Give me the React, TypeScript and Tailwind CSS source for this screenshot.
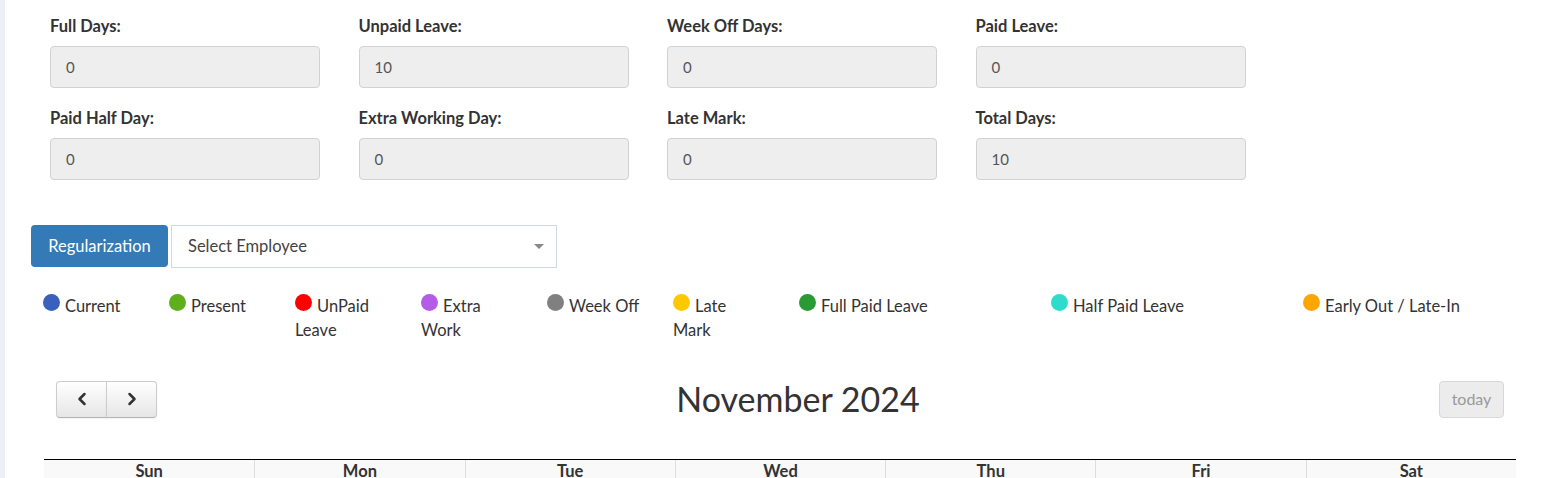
import { ChevronLeft, ChevronRight } from "lucide-react";

const STATS = [
  { label: "Full Days:", value: "0" },
  { label: "Unpaid Leave:", value: "10" },
  { label: "Week Off Days:", value: "0" },
  { label: "Paid Leave:", value: "0" },
  { label: "Paid Half Day:", value: "0" },
  { label: "Extra Working Day:", value: "0" },
  { label: "Late Mark:", value: "0" },
  { label: "Total Days:", value: "10" },
];

const LEGEND = [
  { lines: ["Current"], color: "bg-[#3a5fbd]" },
  { lines: ["Present"], color: "bg-[#5fae1b]" },
  { lines: ["UnPaid", "Leave"], color: "bg-[#ff0000]" },
  { lines: ["Extra", "Work"], color: "bg-[#b45be8]" },
  { lines: ["Week Off"], color: "bg-[#808080]" },
  { lines: ["Late", "Mark"], color: "bg-[#ffc800]" },
  { lines: ["Full Paid Leave"], color: "bg-[#2a9a35]" },
  { lines: ["Half Paid Leave"], color: "bg-[#2ddccb]" },
  { lines: ["Early Out / Late-In"], color: "bg-[#ffa500]" },
];

const DAYS = ["Sun", "Mon", "Tue", "Wed", "Thu", "Fri", "Sat"];

const navBtn =
  "flex w-[51px] items-center justify-center border border-[#ccc] border-b-[#b3b3b3] bg-gradient-to-b from-white to-[#e6e6e6] text-[#333] shadow-[inset_0_1px_0_rgba(255,255,255,0.2),0_1px_2px_rgba(0,0,0,0.05)]";

export default function App() {
  return (
    <div
      className="flex h-[478px] overflow-hidden bg-white text-[#333]"
      style={{ fontFamily: "Lato, 'Liberation Sans', sans-serif" }}
    >
      <div className="w-[5px] shrink-0 bg-[#ecf0f5]" />
      <div className="flex-1">
        {/* Summary fields */}
        <div className="grid grid-cols-[repeat(4,308.5px)] gap-y-[20px] pl-[45px] pt-[16px]">
          {STATS.map((s) => (
            <div key={s.label}>
              <div className="mb-[9px] text-[16.5px] leading-[21px] font-bold text-[#333]">{s.label}</div>
              <div className="flex h-[42px] w-[270px] items-center rounded-[4px] border border-[#d2d2d2] bg-[#eeeeee] px-[15px] text-[15px] text-[#555]">
                {s.value}
              </div>
            </div>
          ))}
        </div>

        {/* Regularization + employee select */}
        <div className="mt-[45px] flex gap-[3px] pl-[26px]">
          <button className="h-[42px] w-[137px] rounded-[4px] bg-[#337ab7] text-[16.5px] text-white">
            Regularization
          </button>
          <div className="flex h-[43px] w-[386px] items-center justify-between border border-[#d2d6de] pr-[12px] pl-[16px] text-[16.5px] text-[#444]">
            <span>Select Employee</span>
            <span className="h-0 w-0 border-x-[5px] border-t-[5px] border-x-transparent border-t-[#888]" />
          </div>
        </div>

        {/* Legend */}
        <div className="mt-[26px] grid grid-cols-[repeat(6,126px)_252px_252px_252px] pl-[38px]">
          {LEGEND.map((l) => (
            <div key={l.lines[0]} className="text-[16.5px] leading-[24px] text-[#333]">
              <span className={`mr-[5px] inline-block h-[17px] w-[17px] rounded-full align-[1px] ${l.color}`} />
              {l.lines[0]}
              {l.lines[1] && <div>{l.lines[1]}</div>}
            </div>
          ))}
        </div>

        {/* Calendar */}
        <div className="mt-[37px] ml-[39px] w-[1472px]">
          <div className="flex items-center px-[12px]">
            <div className="flex h-[37px]">
              <button className={`${navBtn} rounded-l-[4px]`}>
                <ChevronLeft size={20} strokeWidth={3} />
              </button>
              <button className={`${navBtn} -ml-px rounded-r-[4px]`}>
                <ChevronRight size={20} strokeWidth={3} />
              </button>
            </div>
            <div className="flex-1 text-center text-[34px] leading-[40px] text-[#333]">November 2024</div>
            <button className="h-[37px] w-[65px] rounded-[4px] border border-[#d8d8d8] bg-[#ececec] text-[16px] text-[#999]">
              today
            </button>
          </div>
          <div className="mt-[40px] grid grid-cols-7 border-t border-black bg-[#f9f9f9]">
            {DAYS.map((d, i) => (
              <div
                key={d}
                className={`h-[30px] text-center text-[16.5px] leading-[22px] font-bold text-[#333] ${i > 0 ? "border-l border-[#ddd]" : ""}`}
              >
                {d}
              </div>
            ))}
          </div>
        </div>
      </div>
    </div>
  );
}
